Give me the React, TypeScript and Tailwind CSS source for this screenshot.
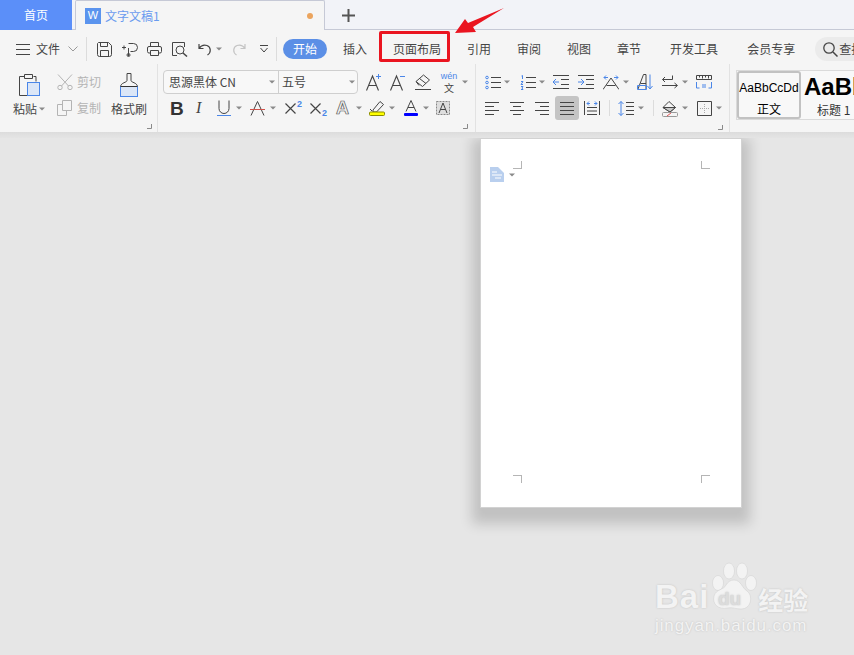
import React from "react";

const ink = "#454545";
const blue = "#4a86e8";
const faded = "#b4b4b4";

type IconProps = { className?: string };

const Svg = ({ w, h, className, children }: { w: number; h: number; className?: string; children: React.ReactNode }) => (
  <svg width={w} height={h} viewBox={`0 0 ${w} ${h}`} fill="none" stroke={ink} strokeWidth={1} className={`shrink-0 ${className ?? ""}`}>
    {children}
  </svg>
);

const Caret = ({ className }: IconProps) => (
  <svg width={6} height={4} viewBox="0 0 6 4" className={`shrink-0 ${className ?? ""}`}>
    <path d="M0 0.5h6L3 3.5z" fill="#8a8a8a" />
  </svg>
);

const Hamburger = ({ className }: IconProps) => (
  <Svg w={14} h={11} className={className}><path d="M0 .5h14M0 5.5h14M0 10.5h14" /></Svg>
);
const Chevron = ({ className }: IconProps) => (
  <Svg w={10} h={6} className={className}><path d="M.5.5 5 5 9.5.5" stroke="#999" /></Svg>
);
const SaveIcon = ({ className }: IconProps) => (
  <Svg w={15} h={15} className={className}>
    <path d="M1.5.5h10l3 3v9a2 2 0 0 1-2 2h-10a2 2 0 0 1-2-2v-11z" />
    <path d="M3.5.5v4h7v-4M3.5 14.5v-6h8v6" />
  </Svg>
);
const SaveAllIcon = ({ className }: IconProps) => (
  <Svg w={16} h={16} className={className}>
    <path d="M6.5 2.5h5a4 4 0 0 1 0 8h-3M6.5 7v8" />
    <path d="M0 6.5h4M2 4.5v4" />
    <circle cx={6.5} cy={14} r={1.5} />
  </Svg>
);
const PrintIcon = ({ className }: IconProps) => (
  <Svg w={15} h={14} className={className}>
    <path d="M3.5 4V.5h8V4M3.5 11H2a1.500 1.500 0 0 1-1.500-1.500V6A1.500 1.500 0 0 1 2 4.500h11A1.500 1.500 0 0 1 14.500 6v3.500A1.500 1.500 0 0 1 13 11h-1.500" />
    <path d="M3.5 8.500h8v5h-8z" />
  </Svg>
);
const PreviewIcon = ({ className }: IconProps) => (
  <Svg w={16} h={15} className={className}>
    <path d="M5 13.500H.5V.5h12V5" />
    <circle cx={8} cy={8} r={4} />
    <path d="M11 11l4 3.500" strokeWidth={1.5} />
  </Svg>
);
const UndoIcon = ({ className, color }: IconProps & { color?: string }) => (
  <svg width={14} height={13} viewBox="0 0 14 13" fill="none" stroke={color ?? ink} strokeWidth={1.2} className={`shrink-0 ${className ?? ""}`}>
    <path d="M1 1v4.500h4.500M1 5.500C3 2.500 6 1.500 9 2.500c4 1.500 4.500 7 .5 9.500" />
  </svg>
);
const QuickMore = ({ className }: IconProps) => (
  <Svg w={8} h={8} className={className}><path d="M0 .5h8" /><path d="M.5 3 4 7l3.500-4" /></Svg>
);
const SearchIcon = ({ className }: IconProps) => (
  <Svg w={15} h={15} className={className}>
    <circle cx={6} cy={6} r={5.2} strokeWidth={1.3} />
    <path d="M10 10l4.500 4.500" strokeWidth={1.5} />
  </Svg>
);

const PasteIcon = () => (
  <Svg w={22} h={24}>
    <path d="M5 3.500H.5v19h9" />
    <path d="M14.500 3.500H17v5" />
    <path d="M5.500 1.500h8v4h-8z" />
    <rect x={8.5} y={9.5} width={12} height={13} fill="#dbe6f7" stroke={blue} />
  </Svg>
);
const CutIcon = () => (
  <Svg w={16} h={16}>
    <g stroke={faded}>
      <path d="M1 .5l10.500 11.500M15 .5 4.500 12" />
      <circle cx={3} cy={13.5} r={2.2} />
      <circle cx={13} cy={13.5} r={2.2} />
    </g>
  </Svg>
);
const CopyIcon = () => (
  <Svg w={15} h={16}>
    <g stroke={faded}>
      <path d="M5.500.5h9v10h-9z" />
      <path d="M5 4.500H.5v11h9V11" />
    </g>
  </Svg>
);
const BrushIcon = () => (
  <Svg w={18} h={24}>
    <path d="M7 .5h4v7c0 2 6 2 6.500 6h-17C1 9.500 7 9.500 7 7.500z" />
    <rect x={.5} y={13.5} width={17} height={10} fill="#dbe6f7" stroke={blue} />
    <path d="M.5 13.500h17" stroke="#333" />
  </Svg>
);

const SizeIcon = ({ sign, className }: { sign: "plus" | "minus"; className?: string }) => (
  <Svg w={16} h={18} className={className}>
    <path d="M.5 17.500 6.500 3l6 14.500M2.500 12.500h8" strokeWidth={1.1} />
    <path d={sign === "plus" ? "M10 3.500h5M12.500 1v5" : "M10 3.500h5"} stroke={blue} />
  </Svg>
);
const EraserIcon = ({ className }: IconProps) => (
  <Svg w={16} h={16} className={className}>
    <path d="M1 7.500 8.500 1l6 5-7 6.500z" />
    <path d="M4.500 4.500l6.500 5" />
    <path d="M1 7.500 4 11.500" />
    <path d="M0 15.500h16" />
  </Svg>
);
const PinyinIcon = ({ className }: IconProps) => (
  <span className={`flex w-[18px] shrink-0 flex-col items-center ${className ?? ""}`}>
    <span className="text-[9px] leading-[10px] text-[#4a86e8] font-['Liberation_Sans',sans-serif]">wén</span>
    <span className="mt-[1px] text-[10px] leading-[11px] text-[#454545]">文</span>
  </span>
);

const Lines = ({ kind, className }: { kind: "bullet" | "number"; className?: string }) => (
  <Svg w={16} h={15} className={className}>
    <path d="M6 2.500h10M6 7.500h10M6 12.500h10" />
    {kind === "bullet" ? (
      <g stroke={blue}>
        <circle cx={2} cy={2.5} r={1.3} />
        <circle cx={2} cy={7.5} r={1.3} />
        <circle cx={2} cy={12.5} r={1.3} />
      </g>
    ) : (
      <path d="M1.500 1 2.500.5v3.500M1 6.500h2L1 9.500h2M1 11.500h2l-1 1.500 1 1.500H1" stroke={blue} />
    )}
  </Svg>
);
const IndentIcon = ({ flip, className }: { flip?: boolean; className?: string }) => (
  <Svg w={16} h={14} className={className}>
    <path d="M0 .5h16M8 4.500h8M8 9.500h8M0 13.500h16" />
    {flip ? <path d="M0 7h6M3 4 0 7l3 3" stroke={blue} /> : <path d="M0 7h5M3 4l3 3-3 3" stroke={blue} />}
  </Svg>
);
const WideIcon = ({ className }: IconProps) => (
  <Svg w={16} h={15} className={className}>
    <path d="M0 14.500 8 3l8 11.500M3.500 10.500h9" />
    <path d="M1 2.500h4M3 .5l-2 2 2 2M15 2.500h-4M13 .5l2 2-2 2" stroke={blue} />
  </Svg>
);
const SortIcon = ({ className }: IconProps) => (
  <Svg w={16} h={16} className={className}>
    <path d="M1 15 6.500.5H9v14.500M3.500 9.500H9" stroke={ink} />
    <path d="M.5 11.500h9v4h-9z" stroke={blue} />
    <path d="M13 .5v14M10.500 12l2.500 3 2.500-3" stroke={blue} />
  </Svg>
);
const EnterIcon = ({ className }: IconProps) => (
  <Svg w={16} h={14} className={className}>
    <path d="M10.500.5v4H.5M3 2 .5 4.500 3 7" />
    <path d="M0 10.500h15M12.500 8l3 2.500-3 2.500" />
  </Svg>
);
const RulerIcon = ({ className }: IconProps) => (
  <Svg w={16} h={14} className={className}>
    <path d="M.5.5h15v4h-15zM3.500.5v2M6.500.5v3M9.500.5v2M12.500.5v3" />
    <path d="M.5 7v6h3M15.500 7v6h-3M7 9v4M9 9v4" stroke={blue} />
  </Svg>
);

const Align = ({ kind, className }: { kind: "left" | "center" | "right" | "justify"; className?: string }) => {
  const d = {
    left: "M0 .5h14M0 4.500h9M0 8.500h14M0 12.500h9",
    center: "M0 .5h14M3 4.500h8M0 8.500h14M3 12.500h8",
    right: "M0 .5h14M5 4.500h9M0 8.500h14M5 12.500h9",
    justify: "M0 .5h14M0 4.500h14M0 8.500h14M0 12.500h14",
  }[kind];
  return <Svg w={14} h={13} className={className}><path d={d} /></Svg>;
};
const DistributeIcon = ({ className }: IconProps) => (
  <Svg w={16} h={14} className={className}>
    <path d="M.5 0v14M15.500 0v14M3 6.500h10M3 10h10M3 13.500h10" />
    <path d="M3 2.500h3M5 .5l-2 2 2 2M13 2.500h-3M11 .5l2 2-2 2" stroke={blue} />
  </Svg>
);
const LineSpacingIcon = ({ className }: IconProps) => (
  <Svg w={16} h={15} className={className}>
    <path d="M8 1.500h8M8 5.500h8M8 9.500h8M8 13.500h8" />
    <path d="M3 .5v14M.5 3 3 .5 5.500 3M.5 12 3 14.500 5.500 12" stroke={blue} />
  </Svg>
);
const FillIcon = ({ className }: IconProps) => (
  <Svg w={16} h={17} className={className}>
    <path d="M1 7.500 7 1.500l6.500 6-5.500 4.500z" />
    <path d="M1 7.500h12.500l-5.500 4.500z" fill="#c9c9c9" stroke={ink} />
    <rect x={.5} y={12.5} width={15} height={4} rx={1} stroke="#999" />
    <path d="M5 16l4-3" stroke="#e25555" />
  </Svg>
);
const BorderIcon = ({ className }: IconProps) => (
  <Svg w={15} h={15} className={className}>
    <path d="M.5.5h14v14H.5z" />
    <path d="M7.500 3v9M3 7.500h9" stroke="#aaa" strokeDasharray="1 1" />
  </Svg>
);

const BoldGlyph = ({ className }: IconProps) => (
  <span className={`w-[12px] shrink-0 text-[19px] font-bold leading-none text-[#333] font-['Liberation_Sans',sans-serif] ${className ?? ""}`}>B</span>
);
const ItalicGlyph = ({ className }: IconProps) => (
  <span className={`w-[9px] shrink-0 text-[16px] italic leading-none text-[#454545] font-['Liberation_Serif',serif] ${className ?? ""}`}>I</span>
);
const UnderlineIcon = ({ className }: IconProps) => (
  <Svg w={14} h={16} className={className}>
    <path d="M2 .5v8a5 5 0 0 0 10 0v-8" />
    <path d="M0 15.500h14" stroke={blue} />
  </Svg>
);
const StrikeA = ({ className }: IconProps) => (
  <Svg w={15} h={15} className={className}>
    <path d="M1 14.500 7.500.5 14 14.500" />
    <path d="M0 8.500h15" stroke="#d0524a" />
  </Svg>
);
const ScriptIcon = ({ up, className }: { up?: boolean; className?: string }) => (
  <span className={`relative block h-[16px] w-[17px] shrink-0 ${className ?? ""}`}>
    <Svg w={11} h={11} className="absolute left-0 top-[3px]"><path d="M.5.5l10 10M10.500.5l-10 10" strokeWidth={1.2} /></Svg>
    <span className={`absolute right-0 text-[9px] font-bold leading-[9px] text-[#4a86e8] font-['Liberation_Sans',sans-serif] ${up ? "top-0" : "bottom-[-2px]"}`}>2</span>
  </span>
);
const OutlineA = ({ className }: IconProps) => (
  <span className={`w-[14px] shrink-0 text-[18px] font-bold leading-none text-[#eeeeee] [-webkit-text-stroke:0.7px_#555] font-['Liberation_Sans',sans-serif] ${className ?? ""}`}>A</span>
);
const MarkerIcon = ({ className }: IconProps) => (
  <Svg w={16} h={16} className={className}>
    <path d="M4 10 11 1.500l3.500 3-7 7.500H4z" />
    <path d="M1 9l2 2" />
    <rect x={.5} y={12} width={15} height={3.5} rx={1} fill="#ffff00" stroke="#8c8c00" />
  </Svg>
);
const ColorA = ({ className }: IconProps) => (
  <Svg w={14} h={16} className={className}>
    <path d="M2 11.500 7 .5l5 11M4 7.500h6" />
    <rect x={0} y={13} width={14} height={3} rx={1} fill="#0000ff" stroke="none" />
  </Svg>
);
const CharBox = ({ className }: IconProps) => (
  <Svg w={14} h={14} className={className}>
    <rect x={.5} y={.5} width={13} height={13} fill="#dedede" stroke="#888" strokeDasharray="2 1" />
    <path d="M3 12 7 2l4 10M4.500 8.500h5" />
  </Svg>
);

const Corner = ({ className }: IconProps) => (
  <svg width={5} height={5} viewBox="0 0 5 5" fill="none" stroke="#8a8a8a" className={`absolute ${className ?? ""}`}>
    <path d="M4.500 0v4.500H0" />
  </svg>
);

const CropMark = ({ pos }: { pos: "tl" | "tr" | "bl" | "br" }) => {
  const cls = {
    tl: "left-[32px] top-[22px] border-b border-r",
    tr: "left-[220px] top-[22px] border-b border-l",
    bl: "left-[32px] top-[336px] border-t border-r",
    br: "left-[220px] top-[336px] border-t border-l",
  }[pos];
  return <span className={`absolute h-[8px] w-[9px] border-[#b5b5b5] ${cls}`} />;
};

const TABS: { label: string; className: string }[] = [
  { label: "插入", className: "ml-[16px]" },
  { label: "页面布局", className: "ml-[26px]" },
  { label: "引用", className: "ml-[26px]" },
  { label: "审阅", className: "ml-[26px]" },
  { label: "视图", className: "ml-[26px]" },
  { label: "章节", className: "ml-[26px]" },
  { label: "开发工具", className: "ml-[29px]" },
  { label: "会员专享", className: "ml-[29px]" },
];

const App = () => {
  return (
    <div className="relative h-[655px] w-[854px] overflow-hidden bg-[#e6e6e6] text-[12px] text-[#454545] font-['Noto_Sans_CJK_SC','Noto_Sans',sans-serif]">
      {/* title bar */}
      <div className="flex h-[30px] border-b border-[#c6c9d6] bg-[#f2f3f8]">
        <div className="flex h-[30px] w-[72px] items-center justify-center bg-[#5b8ff9] text-white">首页</div>
        <div className="ml-[3px] flex h-[30px] w-[250px] items-center rounded-t-[2px] border border-b-0 border-[#c6c9d6] bg-[#f5f5f5] pl-[9px]">
          <span className="flex h-[16px] w-[16px] items-center justify-center bg-[#5b94ee] text-[11px] leading-none text-white font-['Liberation_Sans',sans-serif]">W</span>
          <span className="ml-[4px] text-[#6a9bef]">文字文稿1</span>
          <span className="ml-[147px] h-[6px] w-[6px] rounded-full bg-[#eba45d]" />
        </div>
        <svg width={13} height={13} viewBox="0 0 13 13" className="ml-[17px] mt-[9px]" stroke="#555" strokeWidth={2}>
          <path d="M6.500 0v13M0 6.500h13" />
        </svg>
      </div>

      {/* menu row */}
      <div className="relative z-10 flex h-[34px] items-center overflow-hidden whitespace-nowrap bg-[#f5f5f5] pt-[4px] [&>*]:shrink-0">
        <Hamburger className="ml-[16px]" />
        <span className="ml-[6px]">文件</span>
        <Chevron className="ml-[8px]" />
        <span className="ml-[8px] h-[24px] w-px bg-[#dcdcdc]" />
        <SaveIcon className="ml-[10px]" />
        <SaveAllIcon className="ml-[10px]" />
        <PrintIcon className="ml-[9px]" />
        <PreviewIcon className="ml-[10px]" />
        <UndoIcon className="ml-[10px]" />
        <Caret className="ml-[4px]" />
        <UndoIcon className="ml-[10px] -scale-x-100" color="#c4c4c4" />
        <QuickMore className="ml-[14px]" />
        <span className="ml-[8px] h-[24px] w-px bg-[#dcdcdc]" />
        <span className="ml-[6px] flex h-[20px] w-[44px] items-center justify-center rounded-full bg-[#5b8fe6] text-white">开始</span>
        {TABS.map((tab) => (
          <span key={tab.label} className={tab.className}>{tab.label}</span>
        ))}
        <span className="ml-[20px] flex h-[24px] w-[60px] items-center rounded-full bg-[#ebebeb] pl-[8px]">
          <SearchIcon />
          <span className="ml-[1px]">查找</span>
        </span>
      </div>

      {/* ribbon */}
      <div className="relative z-10 flex h-[68px] overflow-hidden whitespace-nowrap bg-[#f5f5f5]">
        <div className="relative flex h-[68px] w-[158px] shrink-0 border-r border-[#e2e2e2]">
          <div className="ml-[13px] flex w-[33px] flex-col">
            <span className="ml-[6px] mt-[9px]"><PasteIcon /></span>
            <span className="mt-[3px] flex items-center">粘贴<Caret className="ml-[2px]" /></span>
          </div>
          <div className="ml-[11px] flex w-[46px] flex-col text-[#b4b4b4]">
            <span className="mt-[10px] flex h-[16px] items-center gap-[4px]"><CutIcon />剪切</span>
            <span className="mt-[10px] flex h-[16px] items-center gap-[5px]"><CopyIcon />复制</span>
          </div>
          <div className="ml-[8px] flex w-[36px] flex-col items-center">
            <span className="mt-[9px]"><BrushIcon /></span>
            <span className="mt-[3px]">格式刷</span>
          </div>
          <Corner className="left-[147px] top-[60px]" />
        </div>

        <div className="relative h-[68px] w-[318px] shrink-0 border-r border-[#e2e2e2]">
          <div className="ml-[5px] mt-[6px] flex h-[24px] items-center">
            <div className="flex h-[24px] w-[195px] shrink-0 items-center rounded-[4px] border border-[#cfcfcf] bg-[#f8f8f8]">
              <span className="w-[105px] pl-[5px]">思源黑体 CN</span>
              <Caret />
              <span className="ml-[3px] h-[23px] w-px bg-[#cfcfcf]" />
              <span className="ml-[3px] w-[67px]">五号</span>
              <Caret />
            </div>
            <SizeIcon sign="plus" className="ml-[8px]" />
            <SizeIcon sign="minus" className="ml-[8px]" />
            <EraserIcon className="ml-[9px]" />
            <PinyinIcon className="ml-[9px]" />
            <Caret className="ml-[4px]" />
          </div>
          <div className="ml-[12px] mt-[2px] flex h-[24px] items-center">
            <BoldGlyph />
            <ItalicGlyph className="ml-[14px]" />
            <UnderlineIcon className="ml-[12px]" />
            <Caret className="ml-[5px]" />
            <StrikeA className="ml-[8px]" />
            <Caret className="ml-[5px]" />
            <ScriptIcon up className="ml-[9px]" />
            <ScriptIcon className="ml-[8px]" />
            <OutlineA className="ml-[9px]" />
            <Caret className="ml-[6px]" />
            <MarkerIcon className="ml-[7px]" />
            <Caret className="ml-[4px]" />
            <ColorA className="ml-[9px]" />
            <Caret className="ml-[5px]" />
            <CharBox className="ml-[7px]" />
          </div>
          <Corner className="left-[305px] top-[60px]" />
        </div>

        <div className="relative h-[68px] w-[254px] shrink-0 border-r border-[#e2e2e2]">
          <div className="ml-[9px] mt-[6px] flex h-[24px] items-center">
            <Lines kind="bullet" />
            <Caret className="ml-[3px]" />
            <Lines kind="number" className="ml-[10px]" />
            <Caret className="ml-[3px]" />
            <IndentIcon flip className="ml-[8px]" />
            <IndentIcon className="ml-[9px]" />
            <WideIcon className="ml-[9px]" />
            <Caret className="ml-[4px]" />
            <SortIcon className="ml-[8px]" />
            <EnterIcon className="ml-[9px]" />
            <Caret className="ml-[4px]" />
            <RulerIcon className="ml-[8px]" />
          </div>
          <div className="ml-[9px] mt-[2px] flex h-[24px] items-center">
            <Align kind="left" />
            <Align kind="center" className="ml-[11px]" />
            <Align kind="right" className="ml-[11px]" />
            <span className="ml-[6px] flex h-[24px] w-[24px] shrink-0 items-center justify-center rounded-[3px] bg-[#c4c4c4]">
              <Align kind="justify" />
            </span>
            <DistributeIcon className="ml-[5px]" />
            <span className="ml-[9px] h-[16px] w-px bg-[#dcdcdc]" />
            <LineSpacingIcon className="ml-[8px]" />
            <Caret className="ml-[4px]" />
            <span className="ml-[9px] h-[16px] w-px bg-[#dcdcdc]" />
            <FillIcon className="ml-[8px]" />
            <Caret className="ml-[4px]" />
            <BorderIcon className="ml-[9px]" />
            <Caret className="ml-[4px]" />
          </div>
          <Corner className="left-[242px] top-[61px]" />
        </div>

        <div className="ml-[6px] mt-[6px] flex h-[50px] w-[200px] shrink-0 border-y border-l border-[#dadada] bg-[#f8f8f8] text-black">
          <div className="flex w-[64px] shrink-0 flex-col items-center rounded-[3px] border-2 border-[#c2c2c2] bg-[#f8f8f8]">
            <span className="mt-[8px] text-[12px] leading-[14px] font-['Liberation_Sans',sans-serif]">AaBbCcDd</span>
            <span className="mt-[6px] leading-[16px]">正文</span>
          </div>
          <div className="flex w-[136px] shrink-0 flex-col pl-[3px]">
            <span className="mt-[2px] text-[24px] font-bold leading-[28px] font-['Liberation_Sans',sans-serif]">AaBbCcDd</span>
            <span className="ml-[13px] mt-[1px] leading-[16px] text-[#333]">标题 1</span>
          </div>
        </div>
      </div>

      {/* document canvas */}
      <div className="relative z-10 h-[6px] bg-[linear-gradient(#dcdcdc,#e4e4e4)]" />
      <div className="relative ml-[480px] h-[370px] w-[262px] border border-[#d2d2d2] bg-white shadow-[0_8px_12px_8px_rgba(0,0,0,0.16)]">
        <CropMark pos="tl" />
        <CropMark pos="tr" />
        <CropMark pos="bl" />
        <CropMark pos="br" />
        <svg width={14} height={15} viewBox="0 0 14 15" className="absolute left-[9px] top-[28px]">
          <path d="M0 0h8l6 6v9H0z" fill="#b9cfee" />
          <path d="M2 5h5M2 8h10M5 11h6" stroke="#fff" />
        </svg>
        <Caret className="absolute left-[28px] top-[34px]" />
      </div>

      {/* annotation over the tab */}
      <div className="absolute left-[379px] top-[31px] z-20 h-[31px] w-[71px] rounded-[2px] border-[3px] border-[#ea1520]" />
      <svg width={60} height={34} viewBox="0 0 60 34" className="absolute left-[450px] top-[4px] z-20">
        <path d="M5 29 15 15l3 4L54 4 23 23l3 5z" fill="#ea1520" />
      </svg>

      {/* watermark */}
      <div className="absolute left-[655px] top-[562px] w-[160px] text-[#f3f3f3] [text-shadow:0_0_2px_#bdbdbd]">
        <div className="flex h-[52px] items-end">
          <span className="text-[33px] font-bold leading-[34px] tracking-[1px] font-['Liberation_Sans',sans-serif]">Bai</span>
          <svg width={48} height={52} viewBox="0 0 48 52" className="shrink-0">
            <g fill="#f3f3f3" stroke="#cfcfcf" strokeWidth={0.5}>
              <ellipse cx={9} cy={21} rx={5.5} ry={7.5} />
              <ellipse cx={20} cy={9} rx={5.5} ry={8} />
              <ellipse cx={33} cy={9} rx={5.5} ry={8} />
              <ellipse cx={42} cy={21} rx={5.5} ry={7.5} />
              <path d="M25 18c7 0 8 8 13 11 6 4 5 18-6 18-6 0-8-2-13-1-10 2-16-4-14-12 2-7 10-6 12-11 2-3 4-5 8-5z" />
            </g>
            <text x={9} y={43} fontSize={19} fontWeight={700} fill="#dcdcdc" stroke="none" fontFamily="Liberation Sans, sans-serif">du</text>
          </svg>
          <span className="ml-[1px] text-[25px] font-bold leading-[30px]">经验</span>
        </div>
        <div className="mt-[2px] whitespace-nowrap text-[17px] leading-[20px] tracking-[0.9px] font-['Liberation_Sans',sans-serif]">jingyan.baidu.com</div>
      </div>
    </div>
  );
};

export default App;
